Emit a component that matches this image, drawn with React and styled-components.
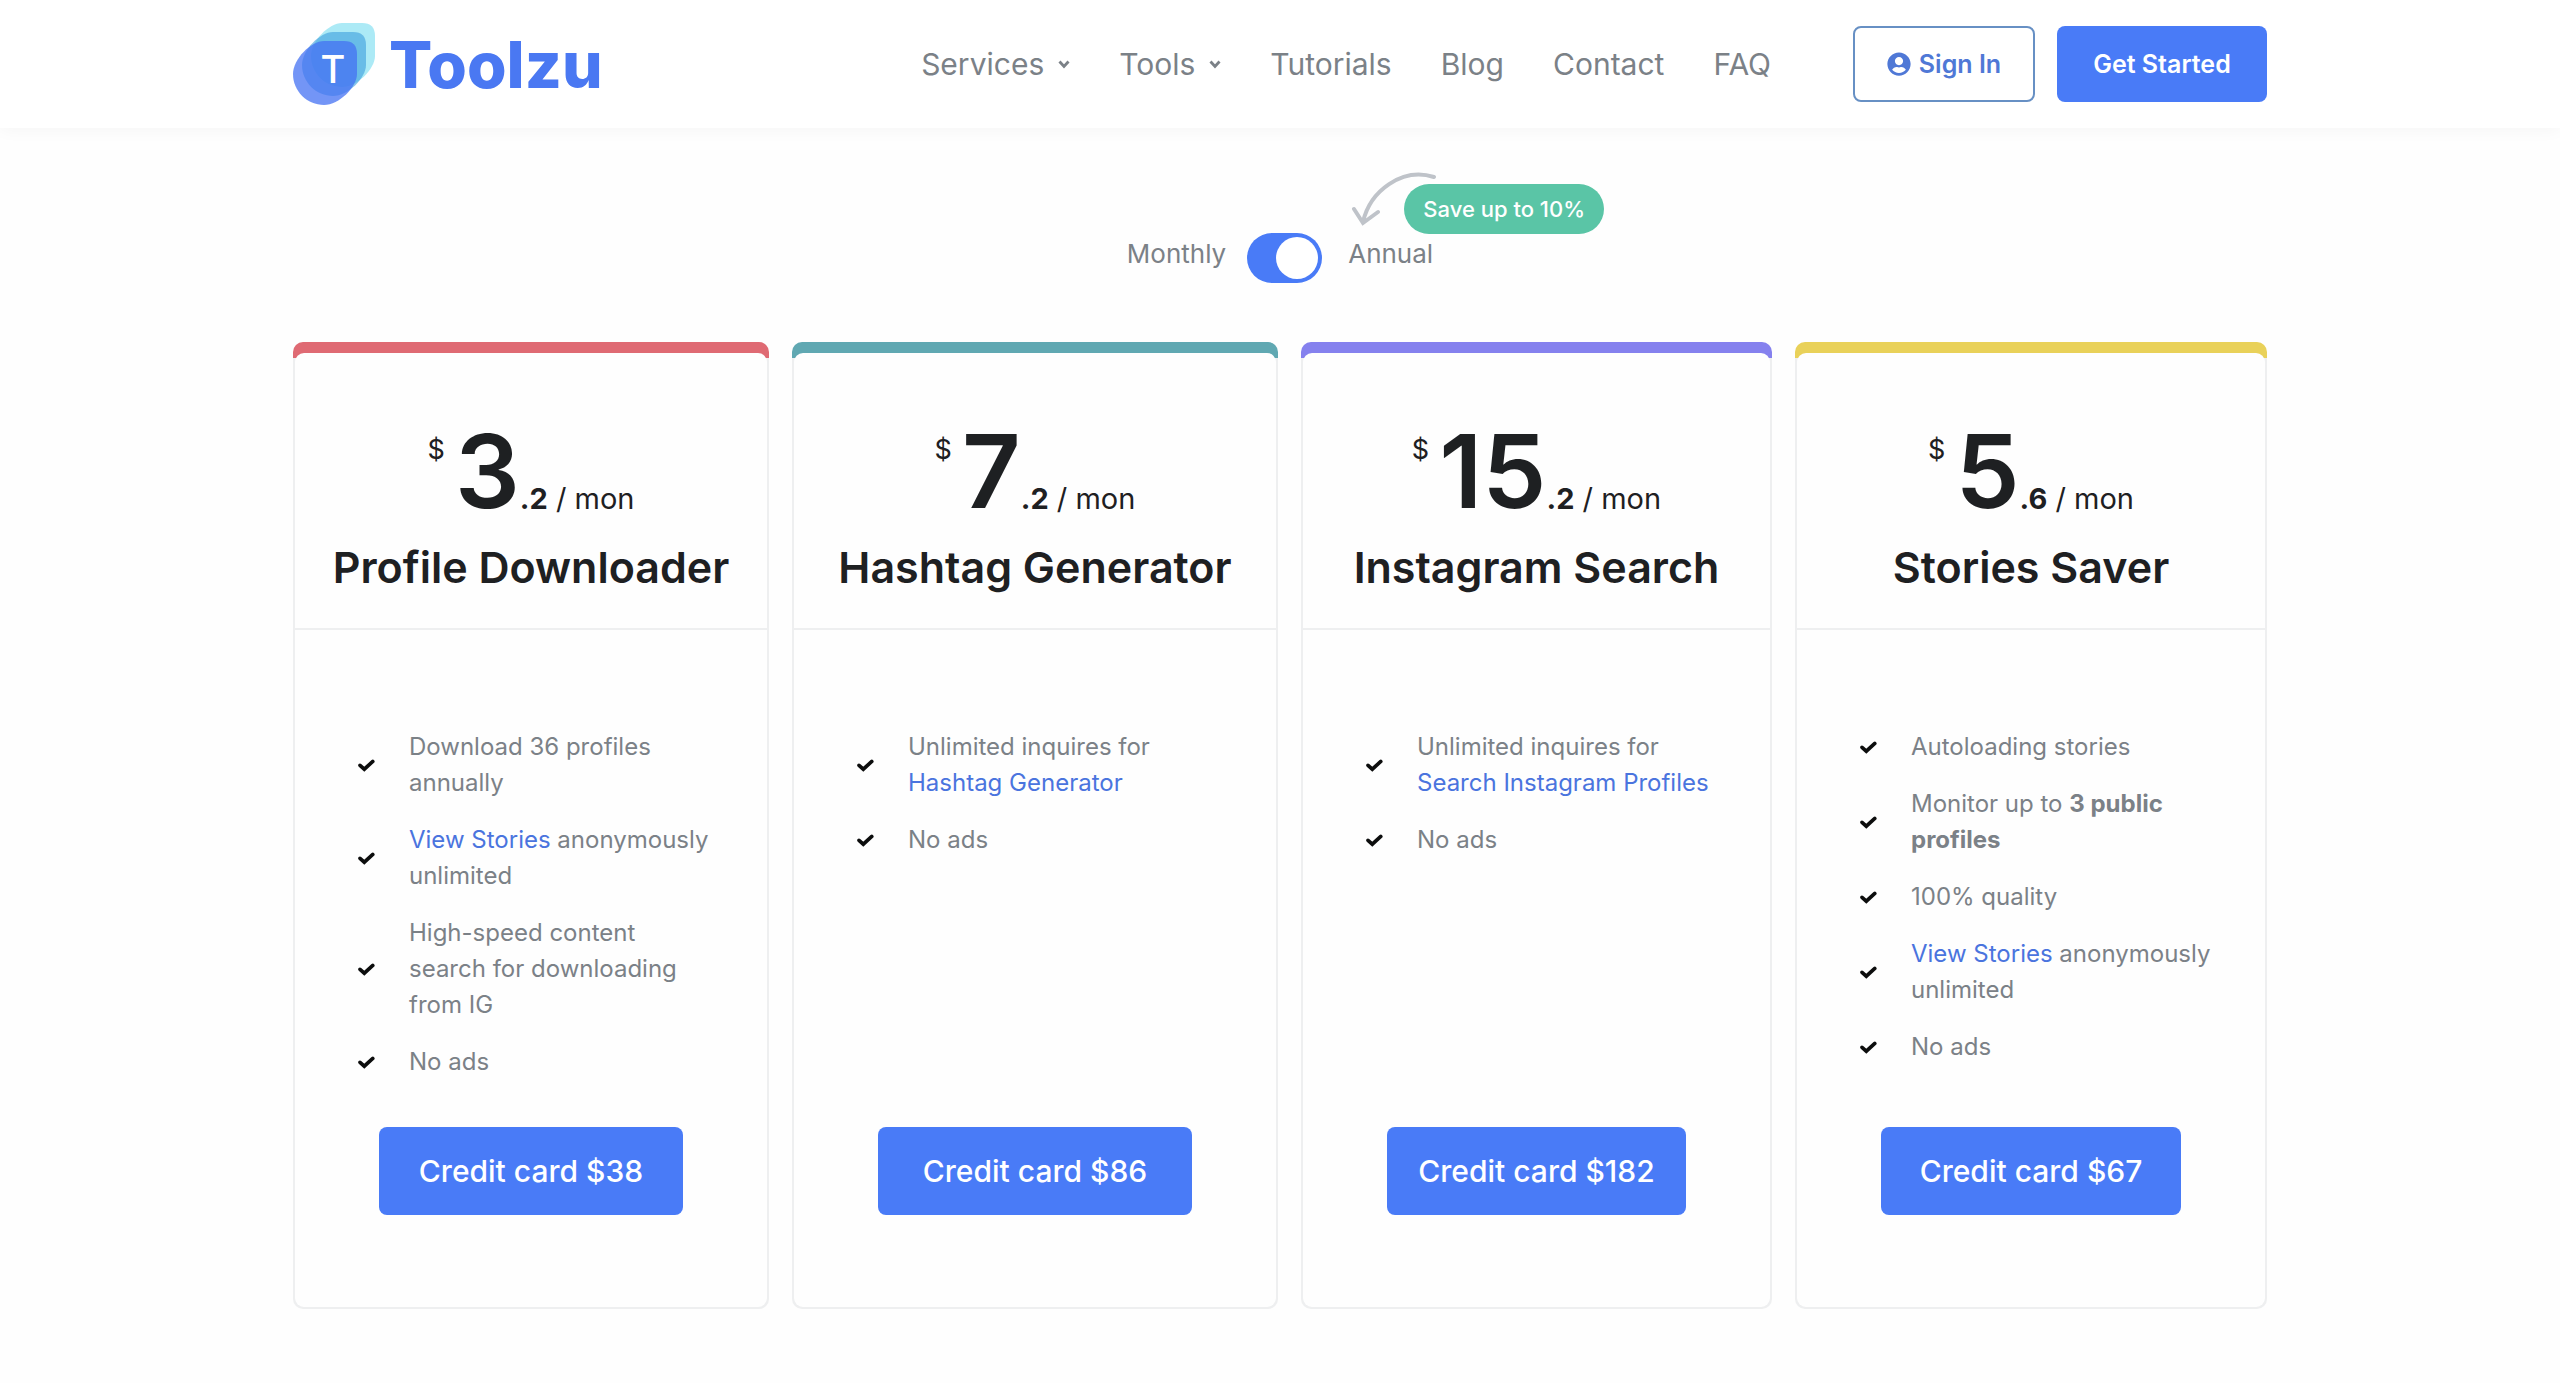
import { useState } from "react";
import styled, { createGlobalStyle } from "styled-components";
import { FaUserCircle } from "react-icons/fa";

const plans = [
  {
    name: "Profile Downloader",
    color: "#df6a73",
    price: "3",
    cents: ".2",
    total: "$38",
    features: [
      "Download 36 profiles annually",
      <>
        <a href="#stories">View Stories</a> anonymously unlimited
      </>,
      "High-speed content search for downloading from IG",
      "No ads",
    ],
  },
  {
    name: "Hashtag Generator",
    color: "#60a8b2",
    price: "7",
    cents: ".2",
    total: "$86",
    features: [
      <>
        Unlimited inquires for <a href="#hashtag">Hashtag Generator</a>
      </>,
      "No ads",
    ],
  },
  {
    name: "Instagram Search",
    color: "#8581ee",
    price: "15",
    cents: ".2",
    total: "$182",
    features: [
      <>
        Unlimited inquires for <a href="#search">Search Instagram Profiles</a>
      </>,
      "No ads",
    ],
  },
  {
    name: "Stories Saver",
    color: "#e9d159",
    price: "5",
    cents: ".6",
    total: "$67",
    features: [
      "Autoloading stories",
      <>
        Monitor up to <b>3 public profiles</b>
      </>,
      "100% quality",
      <>
        <a href="#stories">View Stories</a> anonymously unlimited
      </>,
      "No ads",
    ],
  },
];

const links = [
  { label: "Services", menu: true },
  { label: "Tools", menu: true },
  { label: "Tutorials" },
  { label: "Blog" },
  { label: "Contact" },
  { label: "FAQ" },
];

const Leaf = (props) => (
  <path
    d="M31 0H51Q64 0 64 13V33C64 46 46 64 31 64C14 64 0 50 0 33C0 18 18 0 31 0Z"
    {...props}
  />
);

const LogoMark = () => (
  <svg width="82" height="82" viewBox="0 0 82 82" aria-hidden="true">
    <Leaf transform="translate(18 0)" fill="#aceaf6" />
    <Leaf transform="translate(9 9)" fill="#3f9fdd" fillOpacity="0.62" />
    <Leaf transform="translate(0 18)" fill="#4472f3" fillOpacity="0.75" />
    <text
      x="40"
      y="60"
      fill="#fff"
      fontSize="38"
      fontWeight="500"
      textAnchor="middle"
    >
      T
    </text>
  </svg>
);

const Chevron = () => (
  <svg width="12" height="10" viewBox="0 0 12 10" aria-hidden="true">
    <path d="M1.5 2.5L6 7.5L10.5 2.5" fill="none" stroke="currentColor" strokeWidth="2.8" />
  </svg>
);

const Check = () => (
  <svg width="17" height="13" viewBox="0 0 17 13" aria-hidden="true">
    <path
      d="M2 6.3L6.3 10.2L14.8 2.4"
      fill="none"
      stroke="#0c0d0d"
      strokeWidth="3.6"
      strokeLinecap="round"
    />
  </svg>
);

const App = () => {
  const [annual, setAnnual] = useState(true);

  return (
    <>
      <GlobalStyle />
      <Header>
        <HeaderInner>
          <Logo href="#home">
            <LogoMark />
            Toolzu
          </Logo>
          <Nav>
            {links.map((link) => (
              <NavLink key={link.label} href={`#${link.label.toLowerCase()}`}>
                {link.label}
                {link.menu && <Chevron />}
              </NavLink>
            ))}
          </Nav>
          <Actions>
            <SignIn type="button">
              <FaUserCircle size={24} />
              Sign In
            </SignIn>
            <GetStarted type="button">Get Started</GetStarted>
          </Actions>
        </HeaderInner>
      </Header>

      <Main>
        <Billing>
          <label htmlFor="billing">Monthly</label>
          <Switch
            id="billing"
            type="checkbox"
            role="switch"
            checked={annual}
            onChange={(ev) => setAnnual(ev.target.checked)}
          />
          <AnnualLabel htmlFor="billing">
            Annual
            <Arrow width="88" height="56" viewBox="0 0 88 56" aria-hidden="true">
              <path d="M84 6C52 -4 20 20 13 51M4 38L13 52L28 41" />
            </Arrow>
            <Saving>Save up to 10%</Saving>
          </AnnualLabel>
        </Billing>

        <Plans>
          {plans.map((plan) => (
            <Card key={plan.name} $color={plan.color}>
              <Panel>
                <CardHeader>
                  <Price>
                    <Currency>$</Currency>
                    <Amount>{plan.price}</Amount>
                    <Period>
                      <b>{plan.cents}</b> / mon
                    </Period>
                  </Price>
                  <Title>{plan.name}</Title>
                </CardHeader>
                <Features>
                  {plan.features.map((feature, index) => (
                    <Feature key={index}>
                      <Check />
                      <span>{feature}</span>
                    </Feature>
                  ))}
                </Features>
                <Buy type="button">Credit card {plan.total}</Buy>
              </Panel>
            </Card>
          ))}
        </Plans>
      </Main>
    </>
  );
};

const GlobalStyle = createGlobalStyle`
  *, *::before {
    box-sizing: border-box;
  }

  body {
    margin: 0;
    background: #fefefe;
    color: #7b8187;
    font-family: Inter, "Open Sans", sans-serif;
    font-size: 24px;
  }

  a {
    color: #4a74de;
    text-decoration: none;
  }

  button {
    font-family: inherit;
    cursor: pointer;
  }
`;

const Header = styled.header`
  background: #fff;
  padding: 0 32px;
  box-shadow: 0 2px 16px rgba(0, 0, 0, 0.04);
`;

const HeaderInner = styled.div`
  max-width: 1974px;
  height: 128px;
  margin: 0 auto;
  display: flex;
  align-items: center;
`;

const Logo = styled.a`
  display: flex;
  align-items: center;
  gap: 14px;
  color: #4a78f2;
  font-size: 64px;
  font-weight: 800;
`;

const Nav = styled.nav`
  display: flex;
  gap: 49px;
  margin-left: auto;
`;

const NavLink = styled.a`
  display: flex;
  align-items: center;
  gap: 14px;
  color: #7b8187;
  font-size: 30px;
  line-height: 40px;
`;

const Actions = styled.div`
  display: flex;
  gap: 22px;
  margin-left: 82px;
`;

const HeaderButton = styled.button`
  display: flex;
  align-items: center;
  justify-content: center;
  gap: 8px;
  height: 76px;
  border-radius: 8px;
  font-size: 25px;
  font-weight: 600;
`;

const SignIn = styled(HeaderButton)`
  width: 182px;
  border: 2px solid #6790c4;
  background: #fff;
  color: #4f78d6;
`;

const GetStarted = styled(HeaderButton)`
  width: 210px;
  border: 0;
  background: #497bf7;
  color: #fff;
`;

const Main = styled.main`
  max-width: 2038px;
  margin: 0 auto;
  padding: 105px 32px 72px;
`;

const Billing = styled.div`
  display: flex;
  justify-content: center;
  font-size: 26px;
  line-height: 42px;
`;

const Switch = styled.input`
  appearance: none;
  width: 75px;
  height: 50px;
  margin: 0 26px 0 21px;
  padding: 4px;
  border-radius: 25px;
  background: #c3c8d0;
  cursor: pointer;

  &::before {
    content: "";
    display: block;
    width: 42px;
    height: 42px;
    border-radius: 50%;
    background: #fff;
  }

  &:checked {
    background: #497bf7;
  }

  &:checked::before {
    margin-left: auto;
  }
`;

const AnnualLabel = styled.label`
  position: relative;
`;

const Arrow = styled.svg`
  position: absolute;
  left: 2px;
  top: -62px;
  fill: none;
  stroke: #bfc3c9;
  stroke-width: 4;
  stroke-linecap: round;
`;

const Saving = styled.span`
  position: absolute;
  left: 56px;
  top: -49px;
  width: 200px;
  border-radius: 25px;
  background: #5ac5a6;
  color: #fff;
  font-size: 22px;
  font-weight: 500;
  line-height: 50px;
  text-align: center;
`;

const Plans = styled.div`
  display: grid;
  grid-template-columns: 476fr 486fr 471fr 472fr;
  gap: 23px;
  margin-top: 59px;
`;

const Card = styled.article`
  display: flex;
  padding: 11px 2px 2px;
  border-radius: 10px;
  background: linear-gradient(${(props) => props.$color} 16px, #eeeff0 16px);
`;

const Panel = styled.div`
  flex: 1;
  display: flex;
  flex-direction: column;
  padding-bottom: 92px;
  border-radius: 9px;
  background: #fefefe;
`;

const CardHeader = styled.div`
  padding: 67px 16px 34px;
  border-bottom: 2px solid #eeeff0;
  color: #1e2022;
`;

const Price = styled.div`
  display: flex;
  justify-content: center;
`;

const Currency = styled.span`
  margin-right: 10px;
  font-size: 27px;
  line-height: 60px;
`;

const Amount = styled.span`
  font-size: 102px;
  font-weight: 600;
  line-height: 102px;
`;

const Period = styled.span`
  align-self: flex-end;
  font-size: 29px;
  line-height: 46px;
`;

const Title = styled.h2`
  margin: 18px 0 0;
  font-size: 43px;
  font-weight: 600;
  line-height: 54px;
  text-align: center;
`;

const Features = styled.ul`
  display: flex;
  flex-direction: column;
  gap: 21px;
  margin: 0;
  padding: 99px 52px 47px 63px;
  list-style: none;
`;

const Feature = styled.li`
  display: flex;
  align-items: center;
  gap: 34px;
  line-height: 36px;

  svg {
    flex: none;
  }
`;

const Buy = styled.button`
  height: 88px;
  margin: auto 84px 0;
  border: 0;
  border-radius: 8px;
  background: #497bf7;
  color: #fff;
  font-size: 30px;
  font-weight: 500;
  white-space: nowrap;
`;

export default App;
